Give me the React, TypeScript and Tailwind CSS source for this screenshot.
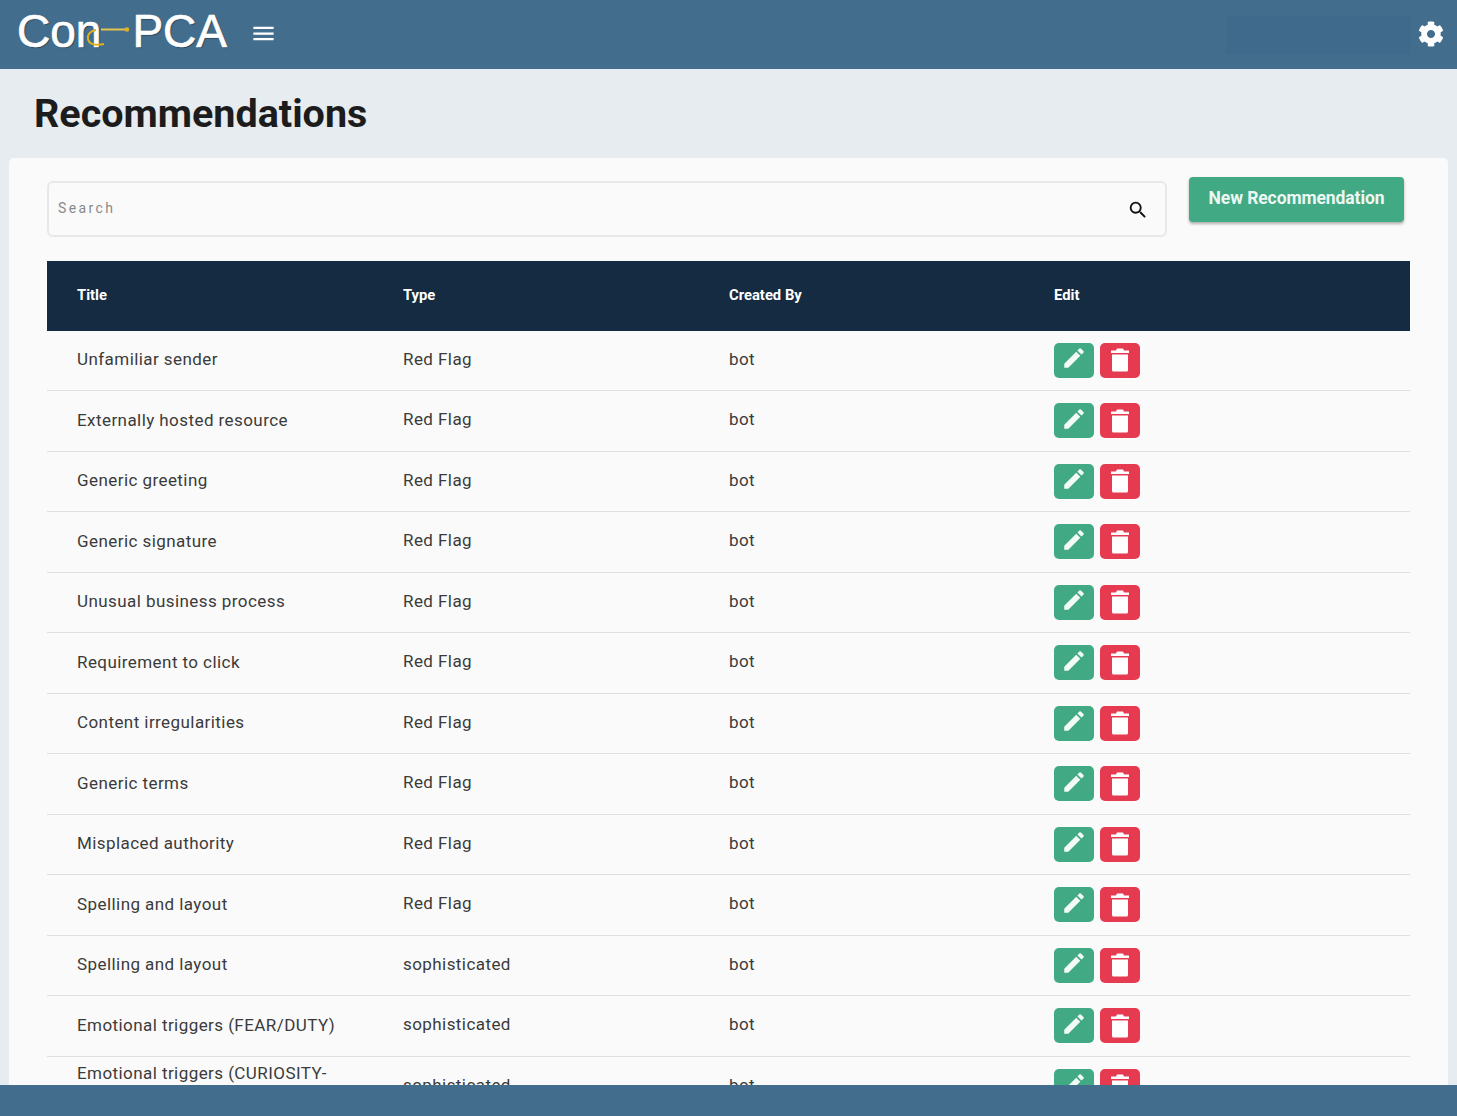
import React from "react";
import { MdMenu, MdSearch, MdEdit } from "react-icons/md";
import { FaCog } from "react-icons/fa";

const rows: [string, string][] = [
  ["Unfamiliar sender", "Red Flag"],
  ["Externally hosted resource", "Red Flag"],
  ["Generic greeting", "Red Flag"],
  ["Generic signature", "Red Flag"],
  ["Unusual business process", "Red Flag"],
  ["Requirement to click", "Red Flag"],
  ["Content irregularities", "Red Flag"],
  ["Generic terms", "Red Flag"],
  ["Misplaced authority", "Red Flag"],
  ["Spelling and layout", "Red Flag"],
  ["Spelling and layout", "sophisticated"],
  ["Emotional triggers (FEAR/DUTY)", "sophisticated"],
  ["Emotional triggers (CURIOSITY-GREED)", "sophisticated"],
];

function Logo() {
  return (
    <div className="relative flex h-[69px] w-[211px] items-center pb-[7px] font-['Liberation_Sans',sans-serif] text-[46px] leading-none text-white [-webkit-text-stroke:0.7px_white] [text-shadow:1px_1px_1px_rgba(0,0,0,0.45)]">
      <span>Con</span>
      <span className="ml-[31px]">PCA</span>
      <svg className="absolute left-0 top-0" width="211" height="69" viewBox="0 0 211 69" fill="none">
        <path d="M84 29.5H111" stroke="#e6c34a" strokeWidth="2" />
        <circle cx="110" cy="29.5" r="2.2" fill="#e2b01f" />
        <path d="M79 30c-6 1-9 5-8 9 1 5 7 7 16 5" stroke="#e2b01f" strokeWidth="2" />
      </svg>
    </div>
  );
}

function Trash() {
  return (
    <svg width="18" height="24" viewBox="0 0 18 24" fill="white">
      <path d="M6 0.500h6l1 2h5v2.500H0V2.500h5z" />
      <path d="M1 6.500h16V22a1.500 1.500 0 0 1-1.500 1.500h-13A1.500 1.500 0 0 1 1 22z" />
    </svg>
  );
}

export default function App() {
  return (
    <div className="flex h-[1116px] flex-col overflow-hidden bg-[#e7ecf0] font-['Roboto',sans-serif]">
      <header className="flex h-[69px] shrink-0 items-center bg-[#436d8d] pl-[17px] pr-[13px]">
        <Logo />
        <MdMenu className="mb-[2px] ml-[22px] text-white" size={27} />
        <div className="ml-auto mr-[8px] h-[38px] w-[184px] bg-[#3f6a8b]" />
        <FaCog className="mb-[1px] text-white" size={26} />
      </header>

      <main className="min-h-0 flex-1 overflow-hidden px-[9px]">
        <h1 className="ml-[25px] flex h-[89px] items-center pt-[1px] text-[39.5px] font-bold text-[#1c1c1c]">
          Recommendations
        </h1>
        <section className="rounded-t-[5px] bg-[#fafafa] px-[38px] pt-[19px]">
          <div className="flex items-start">
            <div className="mt-[4px] flex h-[56px] w-[1120px] items-center rounded-[6px] border-2 border-[#e8e8e8] pl-[9px] pr-[16px]">
              <span className="mb-[2px] text-[14px] tracking-[2.4px] text-[#8a8a8a]">Search</span>
              <MdSearch className="ml-auto mt-[2px] text-[#111]" size={22} />
            </div>
            <button className="ml-[22px] h-[45px] w-[215px] rounded-[4px] bg-[#41a983] pb-[2px] text-[17.5px] font-bold tracking-[-0.1px] text-[#ecf8f3] shadow-[0_2px_3px_rgba(0,0,0,0.3)]">
              New Recommendation
            </button>
          </div>

          <div className="mt-[24px] w-[1363px] text-[17px] tracking-[0.43px] text-[#3b3b3b]">
            <div className="grid h-[69.5px] grid-cols-[326px_326px_325px_1fr] items-center bg-[#142b41] pb-[2px] text-[14.8px] font-bold tracking-normal text-white">
              <div className="pl-[30px]">Title</div>
              <div className="pl-[30px]">Type</div>
              <div className="pl-[30px]">Created By</div>
              <div className="pl-[30px]">Edit</div>
            </div>
            {rows.map(([title, type], i) => (
              <div
                key={i}
                className="grid h-[60.5px] grid-cols-[326px_326px_325px_1fr] items-center border-b border-[#dedede]"
              >
                <div className="pb-[2px] pl-[30px] pr-[30px] leading-[24px]">{title}</div>
                <div className="pb-[2px] pl-[30px]">{type}</div>
                <div className="pb-[2px] pl-[30px]">bot</div>
                <div className="flex gap-[6px] pl-[30px]">
                  <button className="flex h-[35px] w-[40px] items-center justify-center rounded-[5px] bg-[#41a983] pb-[4px] text-[#f2fbf7]">
                    <MdEdit size={26} />
                  </button>
                  <button className="flex h-[35px] w-[40px] items-center justify-center rounded-[5px] bg-[#e63a50]">
                    <Trash />
                  </button>
                </div>
              </div>
            ))}
          </div>
        </section>
      </main>

      <footer className="h-[31px] shrink-0 bg-[#436d8d]" />
    </div>
  );
}
